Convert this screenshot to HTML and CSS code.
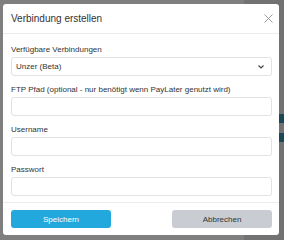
FILE: index.html
```html
<!DOCTYPE html>
<html lang="de">
<head>
    <meta charset="UTF-8">
    <meta name="viewport" content="width=device-width, initial-scale=1.0">
    <title>Verbindung erstellen</title>
    <link rel="stylesheet" href="styles.css">
</head>
<body>
    <div class="page">
        <div class="page-main"></div>
        <div class="page-side">
            <span class="side-title">V</span>
            <span class="side-btn"></span>
            <span class="side-btn"></span>
        </div>
    </div>

    <div class="backdrop">
        <div class="modal">
            <div class="modal-header">
                <h1 class="modal-title">Verbindung erstellen</h1>
                <button class="close-btn" aria-label="Schließen">
                    <svg width="9" height="9" viewBox="0 0 9 9">
                        <path d="M0.5 0.5 L8.5 8.5 M8.5 0.5 L0.5 8.5" stroke="#9a9a9a" stroke-width="1" fill="none"/>
                    </svg>
                </button>
            </div>
            <div class="modal-body">
                <div class="form-group">
                    <label class="form-label">Verfügbare Verbindungen</label>
                    <div class="select">
                        <span>Unzer (Beta)</span>
                        <svg width="6" height="4" viewBox="0 0 6 4">
                            <path d="M0.5 0.5 L3 3 L5.5 0.5" stroke="#444" stroke-width="1.2" fill="none"/>
                        </svg>
                    </div>
                </div>
                <div class="form-group">
                    <label class="form-label">FTP Pfad (optional - nur benötigt wenn PayLater genutzt wird)</label>
                    <input class="form-input" type="text">
                </div>
                <div class="form-group">
                    <label class="form-label">Username</label>
                    <input class="form-input" type="text">
                </div>
                <div class="form-group">
                    <label class="form-label">Passwort</label>
                    <input class="form-input" type="password">
                </div>
            </div>
            <div class="modal-footer">
                <button class="btn btn-primary">Speichern</button>
                <button class="btn btn-secondary">Abbrechen</button>
            </div>
        </div>
    </div>
</body>
</html>
```

FILE: styles.css
```css
body {
    margin: 0;
    font-family: 'Liberation Sans', Arial, sans-serif;
    color: #333;
    width: 284px;
    height: 240px;
    overflow: hidden;
    position: relative;
}
.page {
    display: flex;
    height: 100%;
    background: #fff;
}
.page-main {
    flex: 1;
}
.page-side {
    width: 40px;
    background: #e4e4e4;
    display: flex;
    flex-direction: column;
    gap: 10px;
    padding-top: 96px;
}
.side-title {
    font-size: 10px;
    font-weight: bold;
    color: #222;
    height: 8px;
}
.side-btn {
    height: 9px;
    background: #3a8fb0;
}
.backdrop {
    position: absolute;
    top: 0;
    left: 0;
    right: 0;
    bottom: 0;
    background: rgba(0, 0, 0, 0.5);
    padding: 4px 5px 5px 3px;
    display: flex;
}
.modal {
    flex: 1;
    background: #fff;
    border-radius: 3px;
    display: flex;
    flex-direction: column;
}
.modal-header {
    height: 29px;
    border-bottom: 1px solid #ececec;
    display: flex;
    align-items: center;
    justify-content: space-between;
    padding: 0 6px 0 8px;
}
.modal-title {
    margin: 0;
    font-size: 10px;
    font-weight: normal;
    color: #333;
}
.close-btn {
    border: none;
    background: none;
    padding: 0;
    width: 9px;
    height: 9px;
    display: flex;
}
.modal-body {
    flex: 1;
    padding: 10px 7px 0 8px;
    display: flex;
    flex-direction: column;
    gap: 8px;
}
.form-group {
    display: flex;
    flex-direction: column;
}
.form-label {
    font-size: 8px;
    line-height: 11px;
    margin-bottom: 2px;
    color: #333;
}
.select,
.form-input {
    box-sizing: border-box;
    height: 19px;
    border: 1px solid #e0e2e5;
    border-radius: 3px;
    background: #fff;
    margin: 0;
}
.select {
    display: flex;
    align-items: center;
    justify-content: space-between;
    padding: 0 7px 0 4px;
    font-size: 8px;
    color: #333;
}
.form-input {
    width: 100%;
    padding: 0 4px;
    font-family: inherit;
    font-size: 8px;
}
.modal-footer {
    border-top: 1px solid #ececec;
    display: flex;
    justify-content: space-between;
    padding: 7px 7px 7px 8px;
}
.btn {
    width: 100px;
    height: 18px;
    border: none;
    border-radius: 3px;
    font-family: inherit;
    font-size: 8px;
    padding: 0;
}
.btn-primary {
    background: #22a8dc;
    color: #fff;
}
.btn-secondary {
    background: #c9cdd3;
    color: #333;
}
```
